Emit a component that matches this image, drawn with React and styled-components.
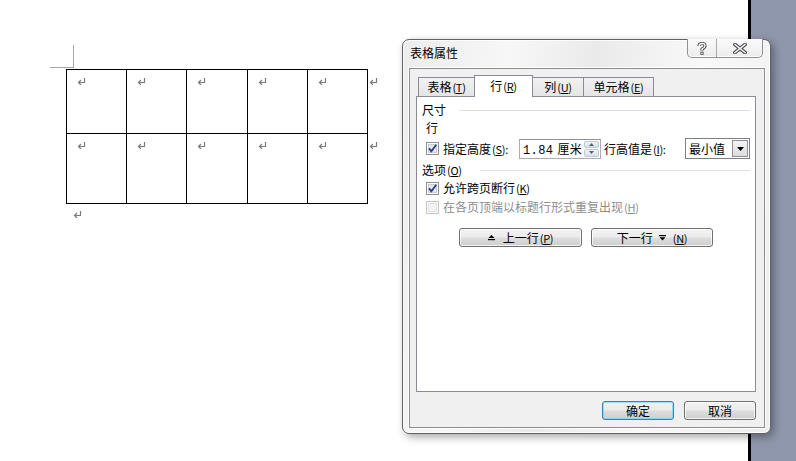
import React from 'react'
import styled, { createGlobalStyle } from 'styled-components'

const GlobalStyle = createGlobalStyle`
  html, body { margin: 0; padding: 0; }
  body {
    font-family: "Noto Sans CJK SC", "Liberation Sans", sans-serif;
    font-size: 12px;
    overflow: hidden;
  }
`

const Screen = styled.div`
  position: relative;
  display: flex;
  width: 796px;
  height: 461px;
  overflow: hidden;
  background: #fff;
`

const Page = styled.div`
  flex: 1;
  box-sizing: border-box;
  padding: 45px 0 0 50px;
  background: #fff;
`

const PageEdge = styled.div`
  width: 3px;
  background: #000;
`

const Gutter = styled.div`
  width: 45px;
  background: #8f97ac;
`

const CornerMark = styled.div`
  width: 24px;
  height: 23px;
  box-sizing: border-box;
  border-right: 1px solid #a6a6a6;
  border-bottom: 1px solid #a6a6a6;
`

const Table = styled.div`
  display: flex;
  flex-direction: column;
  margin: 1px 0 0 16px;
`

const TableRow = styled.div`
  display: flex;
  align-items: flex-start;
`

const Cells = styled.div`
  display: flex;
  border-left: 1px solid #000;
  border-top: ${p => (p.$first ? '1px solid #000' : 'none')};
`

const Cell = styled.div`
  box-sizing: border-box;
  width: ${p => p.$w}px;
  height: ${p => p.$h}px;
  padding: 8px 0 0 10px;
  border-right: 1px solid #000;
  border-bottom: 1px solid #000;
  line-height: 0;
`

const RowEnd = styled.div`
  padding: ${p => (p.$first ? '9px' : '8px')} 0 0 1px;
  line-height: 0;
`

const TrailingMark = styled.div`
  margin: 7px 0 0 23px;
  line-height: 0;
`

const ReturnMark = () => (
  <svg width="9" height="7" viewBox="0 0 9 7">
    <path d="M7.5 0 V4.5 H2" fill="none" stroke="#7a7a7a" strokeWidth="1.2" />
    <path d="M4 2 L1.5 4.5 L4 7" fill="none" stroke="#7a7a7a" strokeWidth="1.2" />
  </svg>
)

/* ---------- dialog ---------- */

const Dialog = styled.div`
  position: absolute;
  left: 402px;
  top: 39px;
  width: 369px;
  height: 395px;
  box-sizing: border-box;
  display: flex;
  flex-direction: column;
  border: 1px solid #5f6166;
  border-radius: 7px;
  background: linear-gradient(100deg, #ececec 0%, #f7f7f7 25%, #eaeaea 45%, #f9f9f9 70%, #ededed 100%);
  box-shadow: inset 0 0 0 1px rgba(255, 255, 255, 0.8), 3px 3px 8px rgba(0, 0, 0, 0.35);
`

const TitleBar = styled.div`
  display: flex;
  height: 28px;
  padding-left: 7px;
`

const Title = styled.div`
  padding-top: 5px;
  line-height: 16px;
  color: #000;
`

const CaptionGroup = styled.div`
  display: flex;
  height: 19px;
  margin: -1px 7px 0 auto;
  box-sizing: border-box;
  border: 1px solid #8e9094;
  border-top: none;
  border-radius: 0 0 5px 5px;
  overflow: hidden;
  background: linear-gradient(#fbfbfb, #ececec);
  box-shadow: inset 0 -1px 0 rgba(255, 255, 255, 0.9);
`

const CaptionButton = styled.div`
  width: ${p => p.$w}px;
  display: flex;
  align-items: center;
  justify-content: center;
  border-left: ${p => (p.$sep ? '1px solid #a9abae' : 'none')};
`

const HelpIcon = () => (
  <svg width="10" height="13" viewBox="0 0 10 13">
    <path d="M2 4 Q2 1.5 5 1.5 Q8 1.5 8 4 Q8 5.5 5 7 V8.5" fill="none" stroke="#4d4f53" strokeWidth="3.2" strokeLinejoin="round" />
    <path d="M2 4 Q2 1.5 5 1.5 Q8 1.5 8 4 Q8 5.5 5 7 V8.5" fill="none" stroke="#fff" strokeWidth="1.3" />
    <rect x="3.4" y="9.6" width="3.2" height="3.2" fill="#4d4f53" />
    <rect x="4.3" y="10.5" width="1.4" height="1.4" fill="#fff" />
  </svg>
)

const CloseIcon = () => (
  <svg width="14" height="11" viewBox="0 0 14 11">
    <path d="M2 1.5 L12 9.5 M12 1.5 L2 9.5" stroke="#4d4f53" strokeWidth="3.6" strokeLinecap="square" />
    <path d="M2 1.5 L12 9.5 M12 1.5 L2 9.5" stroke="#fff" strokeWidth="1.4" strokeLinecap="square" />
  </svg>
)

const Client = styled.div`
  flex: 1;
  margin: 0 5px 5px 6px;
  box-sizing: border-box;
  border: 1px solid #8b8d91;
  background: #f0f0f0;
  padding: 6px 8px 0 6px;
  box-shadow: 0 0 0 1px rgba(255, 255, 255, 0.85);
`

const TabStrip = styled.div`
  display: flex;
  align-items: flex-end;
  height: 21px;
  padding-left: 2px;
`

const Tab = styled.div`
  position: relative;
  box-sizing: border-box;
  width: ${p => p.$w}px;
  height: ${p => (p.$active ? 22 : 19)}px;
  margin-left: ${p => (p.$firstTab ? 0 : -1)}px;
  margin-bottom: ${p => (p.$active ? -1 : 0)}px;
  z-index: ${p => (p.$active ? 2 : 1)};
  border: 1px solid #898c95;
  border-bottom: none;
  background: ${p => (p.$active ? '#fff' : 'linear-gradient(#f2f2f2, #e4e4e4)')};
  display: flex;
  justify-content: center;
  align-items: ${p => (p.$active ? 'flex-start' : 'center')};
  padding-top: ${p => (p.$active ? 2 : 0)}px;
  line-height: 16px;
  color: #000;
  white-space: nowrap;
`

const Panel = styled.div`
  height: 296px;
  box-sizing: border-box;
  border: 1px solid #898c95;
  background: #fff;
  display: flex;
  flex-direction: column;
  padding: 0 5px 0 0;
`

const SectionHead = styled.div`
  display: flex;
  align-items: center;
  height: 14px;
  margin-top: ${p => p.$mt}px;
  padding-left: 5px;
  line-height: 14px;
  &::after {
    content: '';
    flex: 1;
    height: 1px;
    margin-left: ${p => p.$gap}px;
    background: #dddfe3;
  }
`

const SubLabel = styled.div`
  height: 14px;
  line-height: 14px;
  margin: 4px 0 0 9px;
`

const FieldRow = styled.div`
  display: flex;
  align-items: center;
  height: 21px;
  margin: 3px 0 0 9px;
`

const CheckRow = styled.div`
  display: flex;
  align-items: center;
  height: 16px;
  margin: ${p => p.$mt}px 0 0 9px;
  color: ${p => (p.$disabled ? '#8d8d8d' : '#000')};
`

const CheckLabel = styled.span`
  margin-left: 4px;
  width: ${p => (p.$w ? `${p.$w}px` : 'auto')};
  line-height: 16px;
  white-space: nowrap;
`

const FieldLabel = styled.span`
  width: ${p => p.$w}px;
  margin-left: ${p => p.$ml || 0}px;
  line-height: 16px;
  white-space: nowrap;
`

const Mn = styled.span`
  font-size: 11px;
  letter-spacing: -0.3px;
  margin-left: 1px;
  & u { text-decoration: underline; text-underline-offset: 1px; }
`

const SpinBox = styled.div`
  display: flex;
  box-sizing: border-box;
  width: 82px;
  height: 20px;
  border: 1px solid #abadb3;
  border-top-color: #8e9196;
  background: #fff;
  padding: 1px;
`

const SpinText = styled.div`
  flex: 1;
  padding-left: 2px;
  line-height: 16px;
  font-family: "Liberation Mono", "Noto Sans CJK SC", monospace;
  font-size: 12px;
  letter-spacing: 0.4px;
  & span { font-family: "Noto Sans CJK SC", sans-serif; margin-left: 4px; }
`

const Spinner = styled.div`
  width: 15px;
  display: flex;
  flex-direction: column;
  gap: 1px;
`

const SpinHalf = styled.div`
  flex: 1;
  display: flex;
  align-items: center;
  justify-content: center;
  background: linear-gradient(#f1f4f8, #d9e0e8);
  border: 1px solid #c2c8d1;
  border-radius: 2px;
`

const ComboBox = styled.div`
  display: flex;
  box-sizing: border-box;
  width: 65px;
  height: 21px;
  margin-left: 1px;
  border: 1px solid #7c7f85;
  background: #fff;
  padding: 1px;
`

const ComboText = styled.div`
  flex: 1;
  padding-left: 2px;
  line-height: 17px;
`

const ComboButton = styled.div`
  width: 16px;
  box-sizing: border-box;
  display: flex;
  align-items: center;
  justify-content: center;
  border: 1px solid #8c8f94;
  background: linear-gradient(#f4f4f4, #dcdcdc);
`

const NavRow = styled.div`
  display: flex;
  justify-content: center;
  gap: 9px;
  margin: 13px 0 0 5px;
`

const Button = styled.div`
  box-sizing: border-box;
  width: ${p => p.$w}px;
  height: 19px;
  display: flex;
  align-items: center;
  justify-content: center;
  gap: ${p => p.$gap || 0}px;
  border: 1px solid ${p => (p.$default ? '#3c7fb1' : '#707070')};
  border-radius: 3px;
  background: linear-gradient(#f2f2f2 0%, #ebebeb 48%, #dddddd 52%, #cfcfcf 100%);
  box-shadow: inset 0 0 0 1px ${p => (p.$default ? 'rgba(72, 216, 251, 0.55)' : 'rgba(255, 255, 255, 0.75)')};
  line-height: 16px;
  color: #000;
  white-space: nowrap;
`

const Footer = styled.div`
  display: flex;
  justify-content: flex-end;
  gap: 10px;
  margin-top: 9px;
`

const CheckBox = ({ checked, disabled }) => (
  <svg width="13" height="13" viewBox="0 0 13 13">
    <rect x="0.5" y="0.5" width="12" height="12" fill="#fff" stroke={disabled ? '#c4c4c4' : '#8e8f8f'} />
    <rect x="2.5" y="2.5" width="8" height="8" fill={disabled ? '#f4f4f4' : '#e6e8ea'} stroke={disabled ? '#e0e0e0' : '#c9ccd0'} />
    {checked && (
      <path d="M3 6.3 L5.4 9.2 L10.2 2.8" fill="none" stroke="#2a3f8e" strokeWidth="1.9" />
    )}
  </svg>
)

const Triangle = ({ up, color = '#000', w = 7, h = 4 }) => (
  <svg width={w} height={h} viewBox={`0 0 ${w} ${h}`}>
    <polygon points={up ? `${w / 2},0 ${w},${h} 0,${h}` : `0,0 ${w},0 ${w / 2},${h}`} fill={color} />
  </svg>
)

const PrevIcon = () => (
  <svg width="7" height="6" viewBox="0 0 7 6">
    <polygon points="3.5,0 6.5,3 0.5,3" fill="#000" />
    <rect x="0" y="4" width="7" height="1.2" fill="#000" />
  </svg>
)

const NextIcon = () => (
  <svg width="7" height="6" viewBox="0 0 7 6">
    <rect x="0" y="0" width="7" height="1.2" fill="#000" />
    <polygon points="0.5,2.2 6.5,2.2 3.5,5.4" fill="#000" />
  </svg>
)

const colWidths = [60, 60, 61, 60, 60]
const rowHeights = [64, 70]

const tabs = [
  { label: '表格', key: 'T', w: 57 },
  { label: '行', key: 'R', w: 59, active: true },
  { label: '列', key: 'U', w: 52 },
  { label: '单元格', key: 'E', w: 71 },
]

const Key = ({ k, colon }) => (
  <Mn>
    (<u>{k}</u>){colon ? ':' : ''}
  </Mn>
)

export default function App() {
  return (
    <>
      <GlobalStyle />
      <Screen>
        <Page>
          <CornerMark />
          <Table>
            {rowHeights.map((h, r) => (
              <TableRow key={r}>
                <Cells $first={r === 0}>
                  {colWidths.map((w, c) => (
                    <Cell key={c} $w={w} $h={h}>
                      <ReturnMark />
                    </Cell>
                  ))}
                </Cells>
                <RowEnd $first={r === 0}>
                  <ReturnMark />
                </RowEnd>
              </TableRow>
            ))}
          </Table>
          <TrailingMark>
            <ReturnMark />
          </TrailingMark>
        </Page>
        <PageEdge />
        <Gutter />

        <Dialog>
          <TitleBar>
            <Title>表格属性</Title>
            <CaptionGroup>
              <CaptionButton $w={28}>
                <HelpIcon />
              </CaptionButton>
              <CaptionButton $w={45} $sep>
                <CloseIcon />
              </CaptionButton>
            </CaptionGroup>
          </TitleBar>

          <Client>
            <TabStrip>
              {tabs.map((t, i) => (
                <Tab key={t.key} $w={t.w} $active={t.active} $firstTab={i === 0}>
                  {t.label}
                  <Key k={t.key} />
                </Tab>
              ))}
            </TabStrip>

            <Panel>
              <SectionHead $mt={6} $gap={13}>尺寸</SectionHead>
              <SubLabel>行</SubLabel>
              <FieldRow>
                <CheckBox checked />
                <CheckLabel $w={76}>
                  指定高度<Key k="S" colon />
                </CheckLabel>
                <SpinBox>
                  <SpinText>
                    1.84<span>厘米</span>
                  </SpinText>
                  <Spinner>
                    <SpinHalf>
                      <Triangle up color="#4d6185" w={5} h={3} />
                    </SpinHalf>
                    <SpinHalf>
                      <Triangle color="#4d6185" w={5} h={3} />
                    </SpinHalf>
                  </Spinner>
                </SpinBox>
                <FieldLabel $w={80} $ml={3}>
                  行高值是<Key k="I" colon />
                </FieldLabel>
                <ComboBox>
                  <ComboText>最小值</ComboText>
                  <ComboButton>
                    <Triangle />
                  </ComboButton>
                </ComboBox>
              </FieldRow>

              <SectionHead $mt={4} $gap={18}>
                选项<Key k="O" />
              </SectionHead>
              <CheckRow $mt={3}>
                <CheckBox checked />
                <CheckLabel>
                  允许跨页断行<Key k="K" />
                </CheckLabel>
              </CheckRow>
              <CheckRow $mt={3} $disabled>
                <CheckBox disabled />
                <CheckLabel>
                  在各页顶端以标题行形式重复出现<Key k="H" />
                </CheckLabel>
              </CheckRow>

              <NavRow>
                <Button $w={123} $gap={8}>
                  <PrevIcon />
                  <span>
                    上一行<Key k="P" />
                  </span>
                </Button>
                <Button $w={122} $gap={6}>
                  <span>下一行</span>
                  <NextIcon />
                  <Key k="N" />
                </Button>
              </NavRow>
            </Panel>

            <Footer>
              <Button $w={72} $default>确定</Button>
              <Button $w={72}>取消</Button>
            </Footer>
          </Client>
        </Dialog>
      </Screen>
    </>
  )
}
